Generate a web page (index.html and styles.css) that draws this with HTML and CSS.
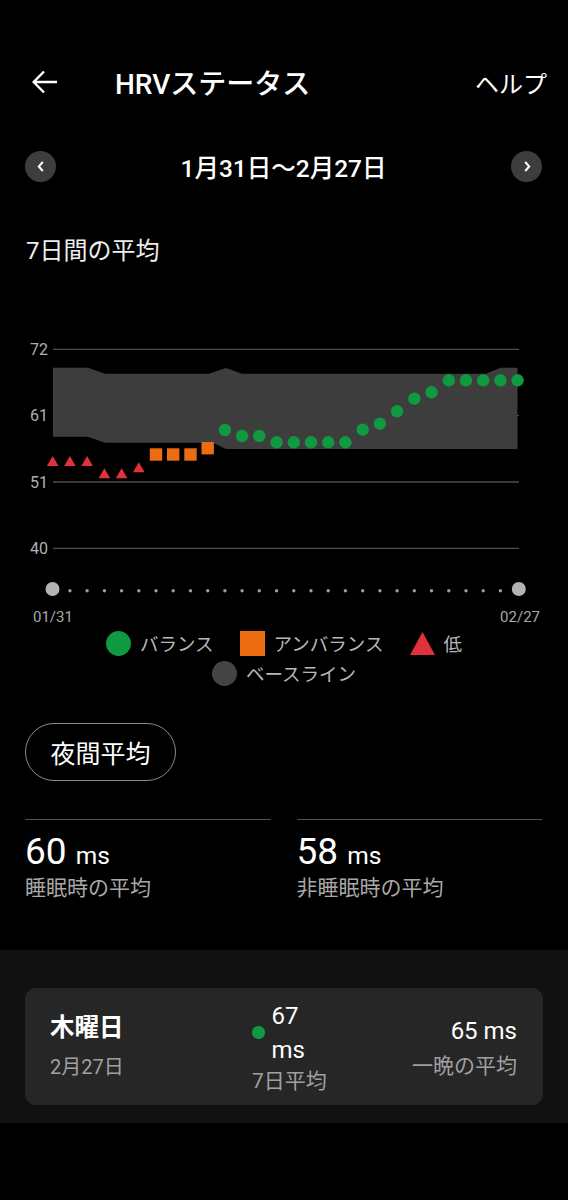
FILE: index.html
```html
<!DOCTYPE html>
<html lang="ja">
<head>
	<meta charset="UTF-8">
	<meta name="viewport" content="width=device-width,initial-scale=1.0">
	<title>HRVステータス</title>
	<link rel="stylesheet" href="styles.css">
</head>
<body>
	<!-- ヘッダー -->
	<div class="topbar">
		<a class="back" href="##">
			<svg width="25" height="24" viewBox="0 0 25 24"><path d="M12 1.5 L1.7 12 L12 22.5 M1.7 12 H25" fill="none" stroke="#fff" stroke-width="2.4"/></svg>
		</a>
		<h1 class="title">HRVステータス</h1>
		<a class="help" href="##">ヘルプ</a>
	</div>
	<!-- 期間 -->
	<div class="range">
		<a class="navBtn" href="##">
			<svg width="8" height="11" viewBox="0 0 8 11"><path d="M5.8 1 L1.8 5.5 L5.8 10" fill="none" stroke="#fff" stroke-width="2"/></svg>
		</a>
		<span class="rangeText">1月31日〜2月27日</span>
		<a class="navBtn" href="##">
			<svg width="8" height="11" viewBox="0 0 8 11"><path d="M2.2 1 L6.2 5.5 L2.2 10" fill="none" stroke="#fff" stroke-width="2"/></svg>
		</a>
	</div>
	<h2 class="sectionTitle">7日間の平均</h2>
	<!-- グラフ -->
	<svg class="chart" width="568" height="300" viewBox="0 0 568 300">
		<g stroke="#4e4e4e" stroke-width="1.3">
			<line x1="53" y1="19.3" x2="519" y2="19.3"/>
			<line x1="53" y1="85.6" x2="519" y2="85.6"/>
			<line x1="53" y1="152" x2="519" y2="152"/>
			<line x1="53" y1="218.3" x2="519" y2="218.3"/>
		</g>
		<g class="axis" text-anchor="end">
			<text x="48" y="25">72</text>
			<text x="48" y="91">61</text>
			<text x="48" y="157.5">51</text>
			<text x="48" y="224">40</text>
		</g>
		<!-- ベースライン -->
		<polygon fill="#3d3d3d" points="53,37.7 88,37.7 105,43.7 209,43.7 226,38 242,43.7 485.7,43.7 500.7,37.7 517.5,37.7 517.5,119 226,119 213,112.7 105,112.7 88,106.7 53,106.7"/>
		<!-- 低 -->
		<g fill="#e1313a">
			<polygon points="52.7,126 46.9,136 58.5,136"/>
			<polygon points="69.9,126 64.1,136 75.7,136"/>
			<polygon points="87.1,126 81.3,136 92.9,136"/>
			<polygon points="104.4,138.3 98.6,148.3 110.2,148.3"/>
			<polygon points="121.6,138.3 115.8,148.3 127.4,148.3"/>
			<polygon points="138.8,132.3 133,142.3 144.6,142.3"/>
		</g>
		<!-- アンバランス -->
		<g fill="#ec6c12">
			<rect x="149.8" y="118.3" width="12.4" height="12.4"/>
			<rect x="167" y="118.3" width="12.4" height="12.4"/>
			<rect x="184.3" y="118.3" width="12.4" height="12.4"/>
			<rect x="201.5" y="112" width="12.4" height="12.4"/>
		</g>
		<!-- バランス -->
		<g fill="#0f9a41">
			<circle cx="224.9" cy="100" r="6.2"/>
			<circle cx="242.1" cy="106" r="6.2"/>
			<circle cx="259.3" cy="106" r="6.2"/>
			<circle cx="276.6" cy="112.3" r="6.2"/>
			<circle cx="293.8" cy="112.3" r="6.2"/>
			<circle cx="311" cy="112.3" r="6.2"/>
			<circle cx="328.2" cy="112.3" r="6.2"/>
			<circle cx="345.4" cy="112.3" r="6.2"/>
			<circle cx="362.7" cy="99.7" r="6.2"/>
			<circle cx="379.9" cy="93.7" r="6.2"/>
			<circle cx="397.1" cy="81.3" r="6.2"/>
			<circle cx="414.3" cy="68.7" r="6.2"/>
			<circle cx="431.5" cy="62.3" r="6.2"/>
			<circle cx="448.8" cy="50.3" r="6.2"/>
			<circle cx="466" cy="50.3" r="6.2"/>
			<circle cx="483.2" cy="50.3" r="6.2"/>
			<circle cx="500.4" cy="50.3" r="6.2"/>
			<circle cx="517.6" cy="50.3" r="6.2"/>
		</g>
		<!-- 日付の目盛り -->
		<g fill="#9c9c9c">
			<circle cx="69.9" cy="260.7" r="1.7"/>
			<circle cx="87.1" cy="260.7" r="1.7"/>
			<circle cx="104.4" cy="260.7" r="1.7"/>
			<circle cx="121.6" cy="260.7" r="1.7"/>
			<circle cx="138.8" cy="260.7" r="1.7"/>
			<circle cx="156" cy="260.7" r="1.7"/>
			<circle cx="173.2" cy="260.7" r="1.7"/>
			<circle cx="190.5" cy="260.7" r="1.7"/>
			<circle cx="207.7" cy="260.7" r="1.7"/>
			<circle cx="224.9" cy="260.7" r="1.7"/>
			<circle cx="242.1" cy="260.7" r="1.7"/>
			<circle cx="259.3" cy="260.7" r="1.7"/>
			<circle cx="276.6" cy="260.7" r="1.7"/>
			<circle cx="293.8" cy="260.7" r="1.7"/>
			<circle cx="311" cy="260.7" r="1.7"/>
			<circle cx="328.2" cy="260.7" r="1.7"/>
			<circle cx="345.4" cy="260.7" r="1.7"/>
			<circle cx="362.7" cy="260.7" r="1.7"/>
			<circle cx="379.9" cy="260.7" r="1.7"/>
			<circle cx="397.1" cy="260.7" r="1.7"/>
			<circle cx="414.3" cy="260.7" r="1.7"/>
			<circle cx="431.5" cy="260.7" r="1.7"/>
			<circle cx="448.8" cy="260.7" r="1.7"/>
			<circle cx="466" cy="260.7" r="1.7"/>
			<circle cx="483.2" cy="260.7" r="1.7"/>
			<circle cx="500.4" cy="260.7" r="1.7"/>
		</g>
		<circle cx="52.5" cy="259" r="7" fill="#b3b3b3"/>
		<circle cx="518.8" cy="259" r="7" fill="#b3b3b3"/>
		<text class="dateLabel" x="33" y="291.7">01/31</text>
		<text class="dateLabel" x="540" y="291.7" text-anchor="end">02/27</text>
	</svg>
	<!-- 凡例 -->
	<div class="legend">
		<div class="legendRow">
			<span class="legendItem"><i class="mark dotGreen"></i>バランス</span>
			<span class="legendItem"><i class="mark boxOrange"></i>アンバランス</span>
			<span class="legendItem">
				<svg class="mark" width="25" height="23" viewBox="0 0 25 23"><polygon points="12.5,0 0,23 25,23" fill="#e1313a"/></svg>低
			</span>
		</div>
		<div class="legendRow">
			<span class="legendItem"><i class="mark dotGray"></i>ベースライン</span>
		</div>
	</div>
	<a class="pill" href="##">夜間平均</a>
	<!-- 平均値 -->
	<div class="stats">
		<div class="stat">
			<div class="statValue">60 <small>ms</small></div>
			<div class="statLabel">睡眠時の平均</div>
		</div>
		<div class="stat">
			<div class="statValue">58 <small>ms</small></div>
			<div class="statLabel">非睡眠時の平均</div>
		</div>
	</div>
	<!-- 日別 -->
	<div class="daily">
		<div class="card">
			<div class="cardLeft">
				<div class="dayName">木曜日</div>
				<div class="dayDate">2月27日</div>
			</div>
			<div class="cardMid">
				<div class="midTop">
					<i class="midDot"></i>
					<span class="midNum">67 ms</span>
				</div>
				<div class="cardSub">7日平均</div>
			</div>
			<div class="cardRight">
				<div class="rightNum">65 ms</div>
				<div class="cardSub">一晩の平均</div>
			</div>
		</div>
	</div>
</body>
</html>
```

FILE: styles.css
```css
*{
	margin: 0;
	padding: 0;
	box-sizing: border-box;
}
body{
	background: #000;
	color: #fff;
	font-family: Roboto, "Noto Sans CJK JP", sans-serif;
	width: 568px;
}
a{
	color: #fff;
	text-decoration: none;
}
/*ヘッダー*/
.topbar{
	margin-top: 40px;
	height: 84px;
	display: flex;
	align-items: center;
	padding: 0 21px 0 32px;
}
.back{
	display: flex;
}
.title{
	margin-left: 58px;
	font-size: 28px;
	font-weight: 500;
	flex: 1;
}
.help{
	font-size: 24px;
}
/*期間*/
.range{
	height: 84px;
	display: flex;
	align-items: center;
	justify-content: space-between;
	padding: 0 26px 0 25px;
}
.navBtn{
	width: 31px;
	height: 31px;
	border-radius: 50%;
	background: #3d3d3d;
	display: flex;
	align-items: center;
	justify-content: center;
}
.rangeText{
	font-size: 24.5px;
	font-weight: 500;
}
.sectionTitle{
	margin-top: 28px;
	padding-left: 26px;
	font-size: 24px;
	font-weight: 400;
	line-height: 30px;
	color: #eee;
}
/*グラフ*/
.chart{
	display: block;
	margin-top: 64px;
}
.axis text{
	font-size: 16px;
	fill: #b0b0b0;
}
.dateLabel{
	font-size: 15px;
	fill: #a8a8a8;
}
/*凡例*/
.legend{
	display: flex;
	flex-direction: column;
	align-items: center;
	gap: 4px;
}
.legendRow{
	display: flex;
	gap: 26px;
	height: 26px;
	align-items: center;
}
.legendItem{
	display: flex;
	align-items: center;
	gap: 9px;
	font-size: 18.5px;
	color: #b8b8b8;
}
.mark{
	display: block;
	flex: none;
}
.dotGreen, .dotGray{
	width: 25px;
	height: 25px;
	border-radius: 50%;
	background: #0f9a41;
}
.dotGray{
	background: #444;
}
.boxOrange{
	width: 25px;
	height: 25px;
	background: #ec6c12;
}
/*夜間平均ボタン*/
.pill{
	display: flex;
	align-items: center;
	justify-content: center;
	margin: 37px 0 0 25px;
	width: 151px;
	height: 58px;
	border: 1.5px solid #8a8a8a;
	border-radius: 29px;
	font-size: 25px;
}
/*平均値*/
.stats{
	display: flex;
	gap: 26px;
	padding: 0 26px 0 25px;
	margin-top: 38px;
}
.stat{
	flex: 1;
	border-top: 1.5px solid #555;
	padding-top: 11px;
}
.statValue{
	font-size: 37px;
	line-height: 42px;
}
.statValue small{
	font-size: 24.5px;
}
.statLabel{
	margin-top: -3px;
	font-size: 21px;
	line-height: 28px;
	color: #a8a8a8;
}
/*日別カード*/
.daily{
	margin-top: 48px;
	background: #111;
	padding: 38px 0 18px;
}
.card{
	margin: 0 25px;
	height: 117px;
	background: #262626;
	border-radius: 11px;
	display: flex;
	align-items: center;
	padding: 0 26px 0 25px;
}
.cardLeft{
	width: 202px;
}
.dayName{
	font-size: 24.5px;
	font-weight: 700;
	line-height: 34px;
	margin-bottom: 7px;
}
.dayDate{
	font-size: 20px;
	line-height: 30px;
	color: #a0a0a0;
}
.midTop{
	display: flex;
	align-items: center;
	gap: 7px;
}
.midDot{
	width: 12.5px;
	height: 12.5px;
	border-radius: 50%;
	background: #0f9a41;
}
.midNum{
	width: 40px;
	font-size: 24px;
	line-height: 34px;
}
.cardSub{
	font-size: 21px;
	line-height: 28px;
	color: #a0a0a0;
}
.cardRight{
	margin-left: auto;
	text-align: right;
}
.rightNum{
	font-size: 24px;
	line-height: 34px;
	margin-bottom: 4px;
}
```
